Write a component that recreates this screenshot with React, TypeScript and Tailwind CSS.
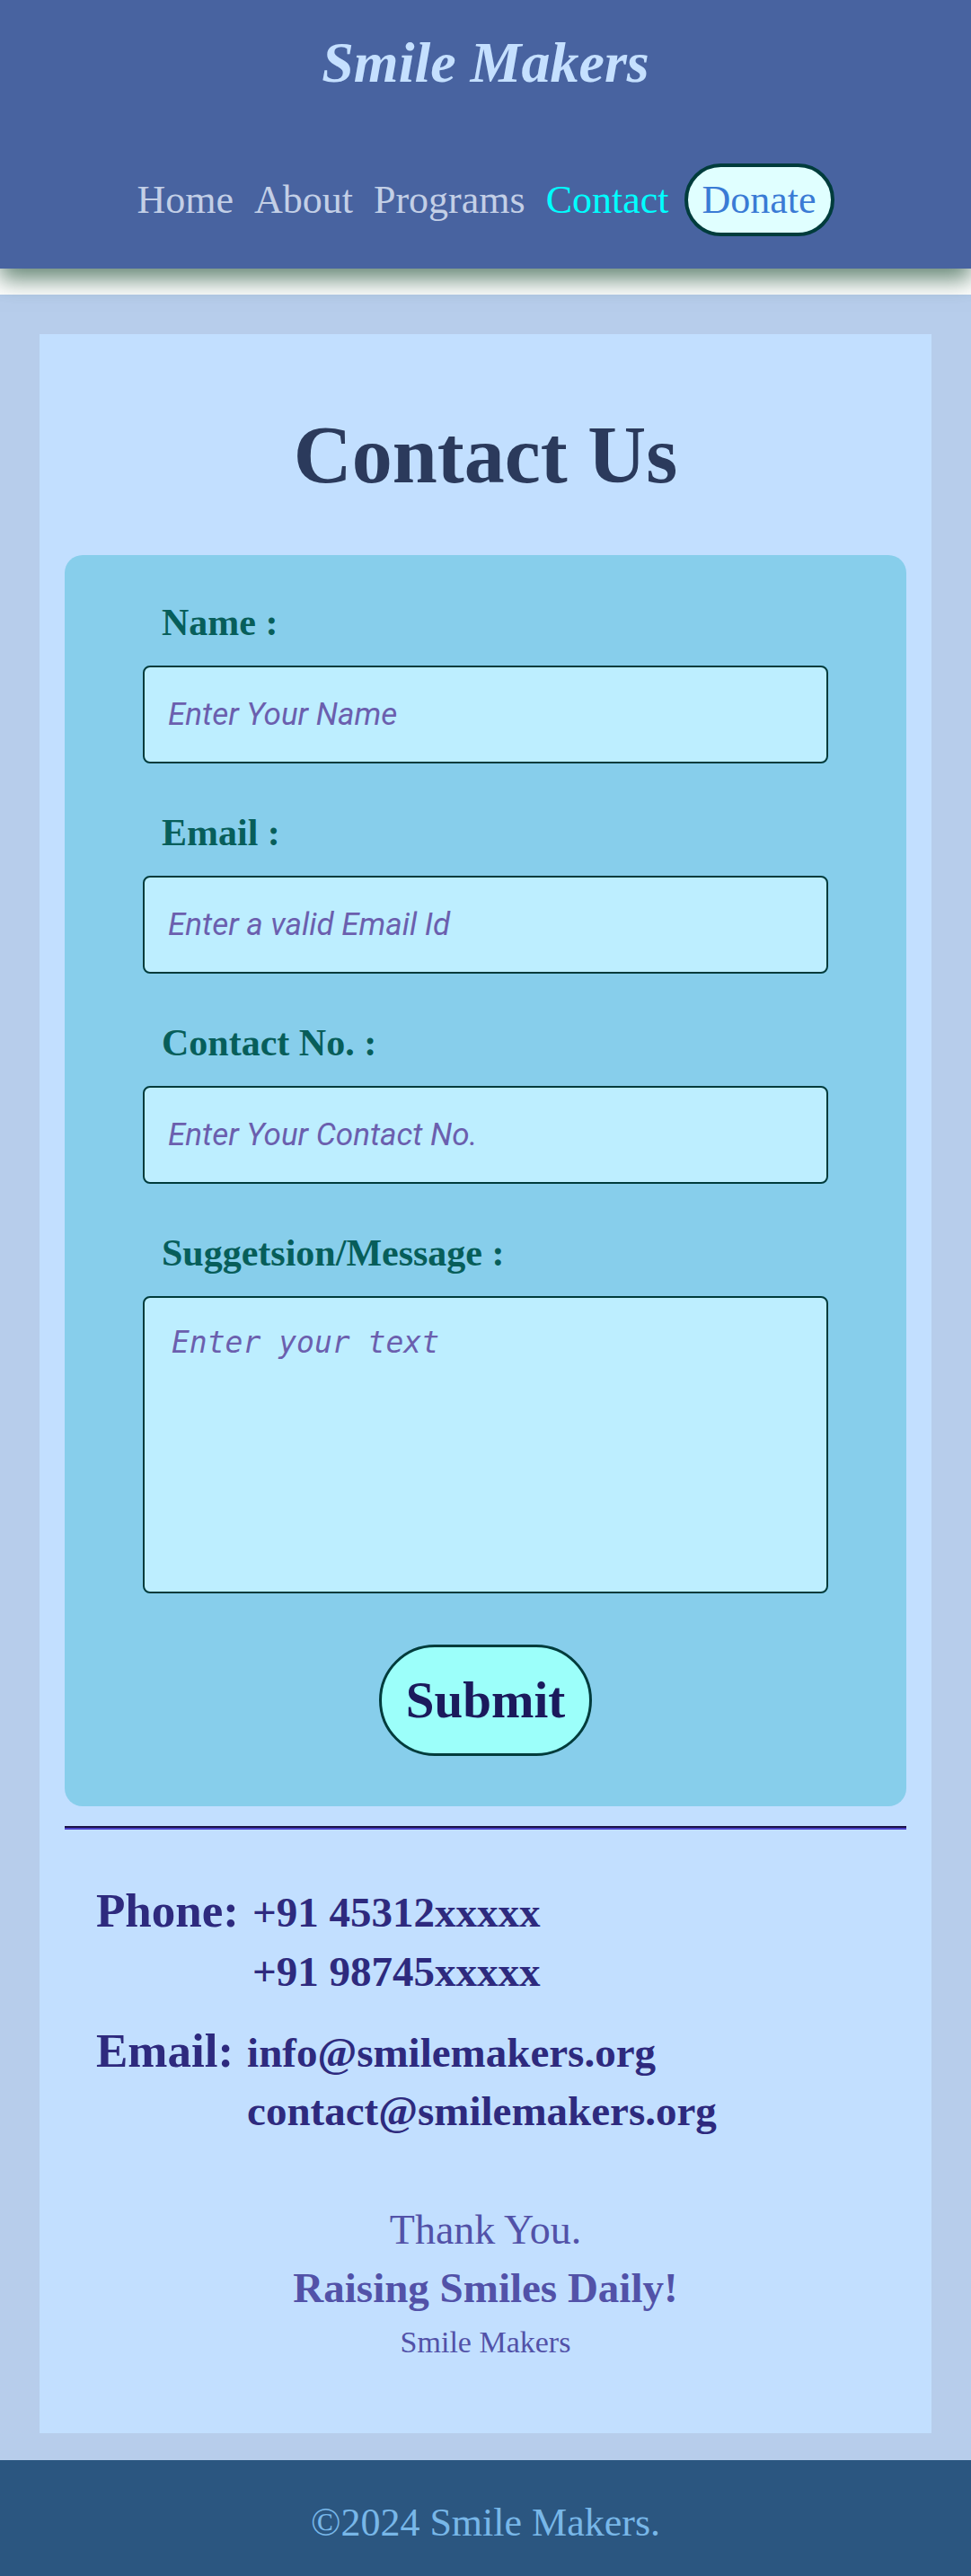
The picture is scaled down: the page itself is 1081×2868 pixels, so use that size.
import React from "react";

const serif = "font-['Liberation_Serif','Times_New_Roman',serif]";

function Field({ label, placeholder }: { label: string; placeholder: string }) {
  return (
    <div className="flex flex-col">
      <label className={`${serif} font-bold text-[42px] leading-[42px] text-[#075e5a] pl-[21px] mb-[27px]`}>
        {label}
      </label>
      <input
        type="text"
        placeholder={placeholder}
        className="h-[109px] w-full rounded-[8px] border-2 border-[#003b3b] bg-[#bdeeff] pl-[26px] font-['Roboto',sans-serif] italic text-[35px] text-[#6b5fae] placeholder:text-[#6b5fae] outline-none"
      />
    </div>
  );
}

export default function App() {
  return (
    <div className="min-h-screen bg-white">
      <header className="relative z-10 bg-[#4863a0] pt-[38px] pb-[36px] shadow-[0_12px_24px_rgba(20,70,45,0.65)]">
        <h1 className={`${serif} text-center font-bold italic text-[64px] leading-[64px] text-[#c5e0ff]`}>
          Smile Makers
        </h1>
        <nav className={`${serif} mt-[80px] flex items-center justify-center gap-[23px] text-[44px] text-[#c3cfe6]`}>
          <a href="#">Home</a>
          <a href="#">About</a>
          <a href="#">Programs</a>
          <a href="#" className="text-[#00ffff]">Contact</a>
          <button className="-ml-[6px] flex h-[81px] w-[167px] items-center justify-center rounded-full border-4 border-[#003c3c] bg-[#e0ffff] text-[#3a7bd5]">
            Donate
          </button>
        </nav>
      </header>

      <main className="mt-[29px] bg-[#b7cdeb] px-[44px] pt-[44px] pb-[30px]">
        <div className="bg-[#c2dfff] px-[28px] pt-[90px] pb-[73px]">
          <h2 className={`${serif} text-center font-bold text-[90px] leading-[90px] text-[#2b3a5c]`}>
            Contact Us
          </h2>

          <form
            className="mt-[66px] rounded-[20px] bg-[#87ceeb] px-[87px] pt-[54px] pb-[56px]"
            onSubmit={(e) => e.preventDefault()}
          >
            <div className="flex flex-col gap-[56px]">
              <Field label="Name :" placeholder="Enter Your Name" />
              <Field label="Email :" placeholder="Enter a valid Email Id" />
              <Field label="Contact No. :" placeholder="Enter Your Contact No." />
              <div className="flex flex-col">
                <label className={`${serif} font-bold text-[42px] leading-[42px] text-[#075e5a] pl-[21px] mb-[27px]`}>
                  Suggetsion/Message :
                </label>
                <textarea
                  placeholder="Enter your text"
                  className="h-[331px] w-full resize-none rounded-[8px] border-2 border-[#003b3b] bg-[#bdeeff] pl-[30px] pt-[25px] font-['DejaVu_Sans_Mono',monospace] italic text-[33px] text-[#6b5fae] placeholder:text-[#6b5fae] outline-none"
                />
              </div>
            </div>
            <div className="mt-[57px] flex justify-center">
              <button
                type="submit"
                className={`${serif} h-[124px] w-[237px] rounded-full border-[3px] border-[#003c3c] bg-[#9cfffa] font-bold text-[57px] text-[#1b1a5c]`}
              >
                Submit
              </button>
            </div>
          </form>

          <div className="mt-[22px] border-t-2 border-b-2 border-t-[#1b1446] border-b-[#4a3fc8]" />

          <div className={`${serif} mt-[57px] px-[35px] font-bold text-[#2e2a7e]`}>
            <div className="flex items-baseline gap-[15px]">
              <span className="text-[53px] leading-[66px]">Phone:</span>
              <div className="text-[47px] leading-[66px]">
                <div>+91 45312xxxxx</div>
                <div>+91 98745xxxxx</div>
              </div>
            </div>
            <div className="mt-[22px] flex items-baseline gap-[15px]">
              <span className="text-[53px] leading-[66px]">Email:</span>
              <div className="text-[47px] leading-[65px]">
                <div>info@smilemakers.org</div>
                <div>contact@smilemakers.org</div>
              </div>
            </div>
          </div>

          <div className={`${serif} mt-[68px] text-center text-[#5252a8]`}>
            <p className="text-[46px] leading-[64px]">Thank You.</p>
            <p className="font-bold text-[47px] leading-[64px]">Raising Smiles Daily!</p>
            <p className="text-[34px] leading-[57px]">Smile Makers</p>
          </div>
        </div>
      </main>

      <footer className={`${serif} flex h-[130px] items-center justify-center bg-[#2b5680] pt-[10px] text-[44px] text-[#78b7e8]`}>
        ©2024 Smile Makers.
      </footer>
    </div>
  );
}
